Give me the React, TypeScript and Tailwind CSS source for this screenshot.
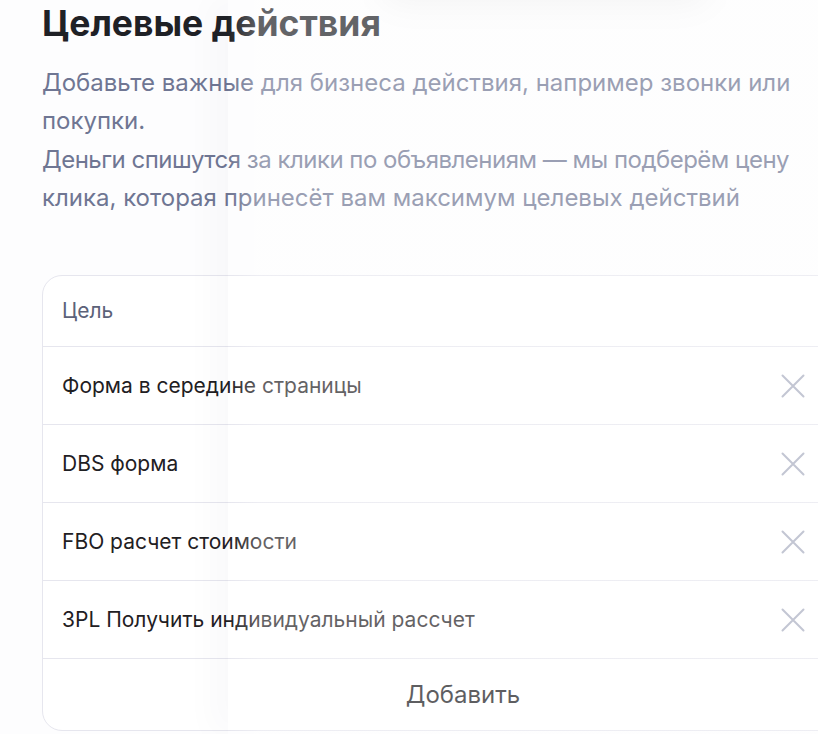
const goals = [
  'Форма в середине страницы',
  'DBS форма',
  'FBO расчет стоимости',
  '3PL Получить индивидуальный рассчет',
];

function CloseIcon() {
  return (
    <svg width="24" height="24" viewBox="0 0 24 24" fill="none" className="shrink-0">
      <path d="M1.5 1.5L22.5 22.5M22.5 1.5L1.5 22.5" stroke="#a9aec0" strokeWidth="2" strokeLinecap="round" />
    </svg>
  );
}

export default function App() {
  return (
    <div className="relative w-[818px] h-[734px] overflow-hidden bg-[#fdfdfe] font-['Inter',sans-serif]">
      <div className="pl-[42px] pt-[3px]">
        <h1 className="text-[35.5px] leading-[42px] font-bold text-[#1f2126]">
          Целевые действия
        </h1>

        <div className="mt-[19px] whitespace-nowrap text-[24px] leading-[38.3px] text-[#6f7693]">
          <p>
            Добавьте важные для бизнеса действия, например звонки или
            <br />
            покупки.
          </p>
          <p>
            <span className="tracking-[-0.5px]">Деньги спишутся за клики по объявлениям — мы подберём цену</span>
            <br />
            клика, которая принесёт вам максимум целевых действий
          </p>
        </div>

        {/* Goals table */}
        <div className="mt-[58px] w-[842px] rounded-[20px] border border-[#e6e6ee] bg-white">
          <div className="flex h-[70px] items-center px-[19px] text-[21px] text-[#5c6279]">
            Цель
          </div>
          {goals.map((goal) => (
            <div
              key={goal}
              className="flex h-[78px] items-center justify-between border-t border-[#e6e6ee] pl-[19px] pr-[78px]"
            >
              <span className="text-[21px] text-[#1f2023]">{goal}</span>
              <CloseIcon />
            </div>
          ))}
          <div className="flex h-[72px] items-center justify-center border-t border-[#e6e6ee] text-[24px] text-[#18191c]">
            Добавить
          </div>
        </div>
      </div>

      {/* translucent panel lying over the right part */}
      <div className="pointer-events-none absolute top-0 bottom-0 left-[228px] right-0 bg-[linear-gradient(to_right,rgba(255,255,255,0)_0px,rgba(255,255,255,0.3)_32px)] shadow-[-18px_0_30px_rgba(60,60,90,0.025)]" />
      <div className="pointer-events-none absolute -top-[40px] left-[380px] h-[44px] w-[330px] rounded-full bg-black/[0.04] blur-lg" />
    </div>
  );
}
